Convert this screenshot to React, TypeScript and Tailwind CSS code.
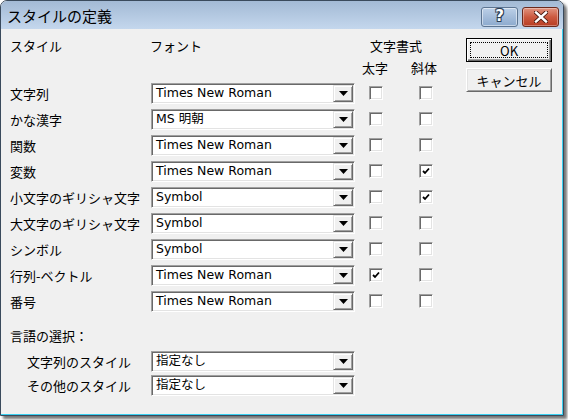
import React from "react";

const JP = { fontFamily: "'Noto Sans CJK JP', sans-serif" };
const LAT = { fontFamily: "'DejaVu Sans', 'Noto Sans CJK JP', sans-serif" };

function Check({ on }: { on?: boolean }) {
  return (
    <div className="w-[14px] h-[14px] flex items-center justify-center bg-white border border-t-[#a0a0a0] border-l-[#a0a0a0] border-b-white border-r-white shadow-[inset_1px_1px_0_#696969,inset_-1px_-1px_0_#e3e3e3]">
      {on && (
        <svg width="9" height="9" viewBox="0 0 9 9">
          <path d="M1 4 L3 6 L7 1.5" stroke="#000" strokeWidth="1.8" fill="none" />
        </svg>
      )}
    </div>
  );
}

function Combo({ value }: { value: string }) {
  return (
    <div className="w-[204px] h-[21px] flex items-center bg-white border border-t-[#a0a0a0] border-l-[#a0a0a0] border-b-white border-r-white shadow-[inset_1px_1px_0_#696969,inset_-1px_-1px_0_#e3e3e3] p-[1px]">
      <span className="flex-1 pl-[3px] text-[12.5px] leading-none text-black whitespace-nowrap" style={LAT}>
        {value}
      </span>
      <div className="w-[20px] h-[17px] flex items-center justify-center bg-[#f0f0f0] border border-t-[#e3e3e3] border-l-[#e3e3e3] border-b-[#696969] border-r-[#696969] shadow-[inset_1px_1px_0_#ffffff,inset_-1px_-1px_0_#a0a0a0]">
        <svg width="9" height="5" viewBox="0 0 9 5">
          <path d="M0 0 H9 L4.5 5 Z" fill="#000" />
        </svg>
      </div>
    </div>
  );
}

const rows: [string, string, boolean, boolean][] = [
  ["文字列", "Times New Roman", false, false],
  ["かな漢字", "MS 明朝", false, false],
  ["関数", "Times New Roman", false, false],
  ["変数", "Times New Roman", false, true],
  ["小文字のギリシャ文字", "Symbol", false, true],
  ["大文字のギリシャ文字", "Symbol", false, false],
  ["シンボル", "Symbol", false, false],
  ["行列-ベクトル", "Times New Roman", true, false],
  ["番号", "Times New Roman", false, false],
];

export default function App() {
  return (
    <div className="w-[568px] h-[420px] bg-white relative">
      <div className="w-[564px] h-[416px] flex flex-col rounded-t-[7px] border border-[#3a4a5c] shadow-[3px_3px_3px_rgba(0,0,0,0.55)] overflow-hidden bg-[#f0f0f0]">
        {/* title bar */}
        <div className="h-[28px] flex items-center bg-gradient-to-b from-[#a3bad5] to-[#c4d7ed] pl-[6px] pr-[4px]">
          <span className="text-[15px] text-black leading-none flex-1 pt-[1px]" style={JP}>
            スタイルの定義
          </span>
          <div className="flex gap-[4px] mt-[3px]">
            <div className="w-[37px] h-[20px] rounded-[3px] border border-[#5d7592] bg-gradient-to-b from-[#bcd0e8] via-[#a4bcda] to-[#8caace] flex items-center justify-center shadow-[inset_0_0_0_1px_rgba(255,255,255,0.5)]">
              <span className="text-[15px] font-bold text-white leading-none [text-shadow:0_0_1px_#2d3f55,1px_1px_0_#2d3f55,-1px_-1px_0_#2d3f55,1px_-1px_0_#2d3f55,-1px_1px_0_#2d3f55]" style={{ fontFamily: "'DejaVu Sans', sans-serif" }}>
                ?
              </span>
            </div>
            <div className="w-[37px] h-[20px] rounded-[3px] border border-[#6b2a1e] bg-gradient-to-b from-[#e0937f] via-[#cc5a40] to-[#b83c22] flex items-center justify-center shadow-[inset_0_0_0_1px_rgba(255,255,255,0.35)]">
              <svg width="14" height="12" viewBox="0 0 14 12">
                <path d="M2 1.5 L12 10.5 M12 1.5 L2 10.5" stroke="#4a1a10" strokeWidth="4.2" strokeLinecap="square" />
                <path d="M2 1.5 L12 10.5 M12 1.5 L2 10.5" stroke="#fff" strokeWidth="2.4" strokeLinecap="square" />
              </svg>
            </div>
          </div>
        </div>
        {/* content */}
        <div className="flex-1 flex border-r border-b border-r-[#3ad0f0] border-b-[#3ad0f0] text-black">
          <div className="pl-[9px] pt-[8px] flex flex-col">
            <div className="h-[16px] flex items-center text-[13px] leading-none" style={JP}>
              <span className="w-[140px]">スタイル</span>
              <span className="w-[220px]">フォント</span>
              <span>文字書式</span>
            </div>
            <div className="h-[16px] mt-[6px] flex items-center text-[13px] leading-none" style={JP}>
              <span className="ml-[352px] w-[49px]">太字</span>
              <span>斜体</span>
            </div>
            <div className="mt-[5px] flex flex-col">
              {rows.map(([label, font, b, i]) => (
                <div key={label} className="h-[26px] flex items-center">
                  <span className="w-[141px] text-[13px] leading-none whitespace-nowrap" style={JP}>
                    {label}
                  </span>
                  <Combo value={font} />
                  <div className="ml-[14px]">
                    <Check on={b} />
                  </div>
                  <div className="ml-[36px]">
                    <Check on={i} />
                  </div>
                </div>
              ))}
            </div>
            <div className="mt-[13px] h-[16px] flex items-center text-[13px] leading-none" style={JP}>
              言語の選択：
            </div>
            <div className="mt-[6px] flex flex-col">
              {["文字列のスタイル", "その他のスタイル"].map((l) => (
                <div key={l} className="h-[24px] flex items-center">
                  <span className="w-[141px] pl-[17px] text-[13px] leading-none whitespace-nowrap" style={JP}>
                    {l}
                  </span>
                  <Combo value="指定なし" />
                </div>
              ))}
            </div>
          </div>
          <div className="ml-[29px] pt-[9px] flex flex-col gap-[6px]">
            <div className="w-[86px] h-[24px] border border-black bg-[#f0f0f0] flex items-center justify-center shadow-[inset_1px_1px_0_#ffffff,inset_-1px_-1px_0_#696969,inset_-2px_-2px_0_#a0a0a0]">
              <div className="w-[78px] h-[16px] border border-dotted border-black flex items-center justify-center text-[13px] leading-none" style={JP}>
                OK
              </div>
            </div>
            <div className="w-[86px] h-[24px] border border-t-white border-l-white border-b-[#696969] border-r-[#696969] bg-[#f0f0f0] flex items-center justify-center shadow-[inset_1px_1px_0_#e3e3e3,inset_-1px_-1px_0_#a0a0a0] text-[13px] leading-none" style={JP}>
              キャンセル
            </div>
          </div>
        </div>
      </div>
    </div>
  );
}
